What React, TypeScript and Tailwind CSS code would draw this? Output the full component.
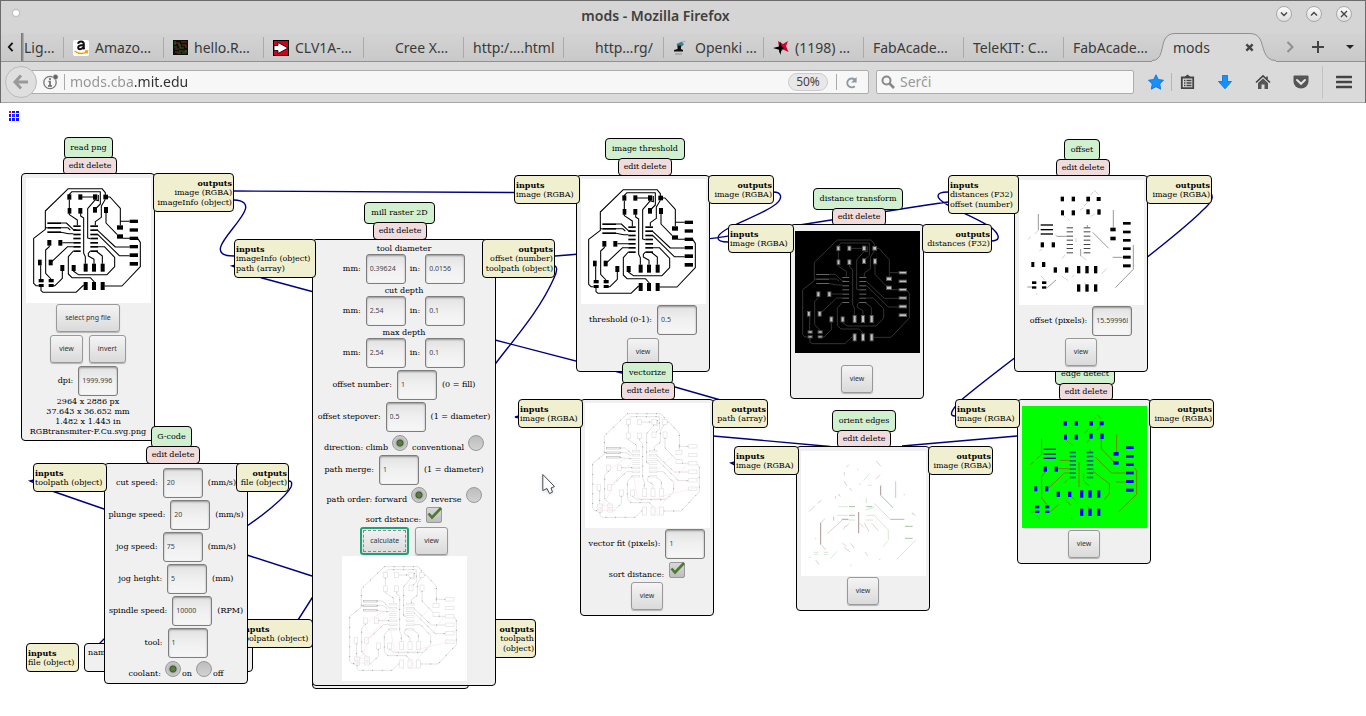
import React from "react";
import type { ReactNode } from "react";

/* ---------- board drawings ---------- */

const PADS: number[][] = [
  [199, 193, 12, 16], [232, 193, 12, 16], [276, 193, 13, 16], [307, 194, 14, 14],
  [200, 234, 11, 17], [232, 234, 12, 17], [276, 231, 12, 17], [309, 231, 12, 18],
  [386, 269, 25, 10], [386, 295, 25, 10], [386, 320, 25, 10], [386, 345, 25, 10], [386, 370, 25, 11], [386, 396, 25, 11],
  [348, 286, 18, 13], [348, 313, 18, 13],
  [139, 330, 12, 17], [172, 330, 12, 17], [111, 389, 11, 17], [143, 389, 12, 17],
  [178, 405, 12, 18], [212, 405, 12, 18],
  [113, 447, 15, 10], [143, 447, 15, 10], [113, 462, 15, 9], [143, 462, 15, 9],
  [248, 401, 12, 24], [273, 401, 12, 24], [299, 401, 12, 24],
  [248, 456, 12, 24], [273, 456, 12, 24], [299, 456, 12, 24],
];

const BARS: number[][] = [
  [139, 277, 41, 5], [139, 291, 41, 5], [139, 304, 41, 5],
];

const PINS: number[][] = [286, 298, 311, 323, 336, 348, 361].flatMap((y) => [
  [217, y, 22, 5],
  [268, y, 23, 5],
]);

const TRACES = [
  "M133 293V243L202 176H303L313 188V196",
  "M205 195V193L213 185H298V222L283 237",
  "M292 195V212L283 209L260 236V324L268 326",
  "M205 209V234M238 201H276",
  "M205 250V254L229 270V286M239 250V258L248 264V370L253 380V401",
  "M313 208L301 228V262L283 275V286",
  "M320 201H327L358 235V274H386M358 274V286",
  "M315 249V279L348 313M366 325H410L418 337V410L363 468H310",
  "M180 279H196L217 299H226M180 293H200L208 300M180 307L203 311H217",
  "M139 293H133V298L98 325V460L105 467H113",
  "M120 471V482L126 487H225L248 465",
  "M119 406V447M184 423V445L162 467H155",
  "M145 347V350L134 360V430L150 447",
  "M184 338H217M149 398L200 350H217",
  "M217 363L202 380V432L213 443H268L280 456",
  "M217 423L232 434H318L341 410V382L310 350H290",
  "M290 301L343 351H386M290 313L355 377H386",
  "M268 363L262 370V378L279 388V401M285 363L304 378V401",
];

function Rects({ list, className }: { list: number[][]; className: string }) {
  return (
    <g className={className}>
      {list.map(([x, y, w, h]) => (
        <rect key={`${x}-${y}`} x={x} y={y} width={w} height={h} />
      ))}
    </g>
  );
}

function PngBoard() {
  return (
    <svg viewBox="75 144 375 375" className="block size-[125px] shrink-0 bg-white">
      <path d={TRACES.join("")} fill="none" stroke="#000" strokeWidth="3.2" strokeLinejoin="round" />
      <Rects list={[...PADS, ...BARS, ...PINS]} className="fill-black" />
    </svg>
  );
}

function VectorBoard() {
  return (
    <svg viewBox="75 144 375 375" className="block size-[125px] shrink-0 bg-white">
      <path d={TRACES.join("")} fill="none" stroke="#dcdcdc" strokeWidth="2.4" />
      <path d={TRACES.join("")} fill="none" stroke="#888" strokeWidth="2.2" strokeDasharray="3 26" />
      <Rects list={[...PADS, ...PINS]} className="fill-white stroke-[#e2e2e2] stroke-2" />
      <Rects list={BARS} className="fill-white stroke-[#bcbcbc] stroke-2" />
      <path
        d="M149 398L217 318M145 345L215 300M220 364L233 432L320 430M290 350L340 300M300 425L410 398M120 470L155 400M273 456L299 480L273 480L299 456L330 420M113 452H158M113 466H158M340 380L386 320"
        fill="none"
        stroke="#fae6e8"
        strokeWidth="2"
      />
    </svg>
  );
}

function DistanceBoard() {
  return (
    <svg viewBox="75 149 375 366" className="block h-[122px] w-[125px] shrink-0 bg-black">
      <path d={TRACES.join("")} fill="none" stroke="#333" strokeWidth="3" />
      <Rects list={[...BARS, ...PINS].map(([x, y, w]) => [x, y + 1, w - 2, 3])} className="fill-[#666]" />
      <Rects list={PADS} className="fill-[#555]" />
      <Rects list={PADS.map(([x, y, w, h]) => [x + 3, y + 3, w - 6, h - 6])} className="fill-[#c4c4c4]" />
    </svg>
  );
}

function OffsetBoard() {
  return (
    <svg viewBox="75 144 375 375" className="block size-[125px] shrink-0 bg-white">
      <g transform="translate(-162 -6)" fill="none" strokeWidth="2">
        <path
          d="M295 252V300M458 307L506 355M520 240V293M518 382H548M580 345V418L526 473M350 319H380M322 473L348 450M442 285V292M422 357V378M262 471H276"
          stroke="#666"
        />
        <path
          d="M264 328L272 321M284 312L296 300M462 180L476 194M452 195L460 185M368 255L376 262M383 266L389 272M432 228L443 217M346 313L350 318M298 364L306 357M366 386L376 374M408 325V336M422 378L440 390M366 438L374 446M376 445L384 452M396 442L404 434M303 438L314 450M484 432L500 416M432 458L438 464M288 492H292M452 260L464 252M420 240L430 234"
          stroke="#bbb"
        />
      </g>
      <Rects list={PINS.map(([x, y, w]) => [x + 1, y, w - 3, 3])} className="fill-[#444]" />
      <Rects list={BARS.map(([x, y, w]) => [x + 1, y, w - 4, 4])} className="fill-black" />
      <Rects list={PADS.map(([x, y, w, h]) => [x + 1, y + 1, w - 2, h - 2])} className="fill-black" />
    </svg>
  );
}

function EdgeBoard() {
  return (
    <svg viewBox="75 149 375 366" className="block h-[122px] w-[125px] shrink-0 bg-[#00ff00]">
      <g transform="translate(-828 12)" fill="none" stroke="#8a7200" strokeWidth="2.6">
        <path d="M962 235V283M928 313L938 305M946 296L962 283M1017 300H1045M1122 290L1172 338H1214M1187 222V276M1185 365H1214M1240 322L1247 332V402L1192 455M1141 235V265L1178 304M962 415V348L973 335M962 412L976 430M1074 305V380M1116 333L1165 370V400L1150 418M983 383L1030 338H1045M1007 325H1045M988 455L1012 432M1088 340V362M1108 268V276" />
        <path
          d="M1129 163L1141 176M1118 178L1124 172M1090 218L1104 206M1126 210L1140 196M1036 240L1044 248M1048 248L1055 256M1098 246L1106 238M1030 368L1040 358M1090 365L1106 377M1034 420L1050 434M1050 408L1064 420M1064 432L1072 424M968 424L980 434M1098 436L1106 446M948 466L956 476M1050 474H1054M930 455H944"
          stroke="#4f9a00"
        />
      </g>
      <Rects list={PINS.map(([x, y, w]) => [x + 1, y, w - 3, 5])} className="fill-[#006a80]" />
      <Rects list={BARS.map(([x, y, w]) => [x + 1, y, w - 4, 4])} className="fill-[#0000c0]" />
      <Rects list={PADS.map(([x, y, w, h]) => [x + 1, y + 1, w - 2, h - 2])} className="fill-[#0000ff]" />
    </svg>
  );
}

function OrientBoard() {
  return (
    <svg viewBox="240 273 375 375" className="block size-[125px] shrink-0 bg-white">
      <g fill="none" strokeWidth="2">
        <path
          stroke="#cdbcbc"
          d="M264 455L282 437M290 430L302 420M299 488L312 476M319 521L366 478H382M466 303L480 319M376 322L384 314M370 336V346M370 364L378 378M386 384L392 392M464 357L478 344M416 490L428 502M430 490L444 514M452 490L472 512M366 508L376 496M376 500L384 490M302 555L314 570M364 548L376 560M388 550L400 564M370 562L388 576M284 600L294 614M432 576L440 588M574 460L584 467M266 592H270M282 536H286M387 616H391M474 598H478M408 328H412M548 404H552M344 408V416M572 460H578"
        />
        <path stroke="#9c8586" strokeWidth="2.6" d="M299 488V554M413 456V520M479 378V406" />
        <path stroke="#c9a6a8" d="M524 364V414M338 470V482M352 402L358 410" />
        <path
          stroke="#bfe0c0"
          d="M352 440H382M348 466H382M436 466H460L502 510V540M460 430L508 478M528 597L584 540M328 596L348 574M428 362L446 340M436 414V430M434 450L460 442M414 372H420M440 376H452M476 376H484M382 480H402M434 480H456M486 560L500 544M278 577H292M308 577H322M278 583H292M308 583H322"
        />
        <path stroke="#8db48f" strokeWidth="2.4" d="M479 406L516 443M508 478H550M552 499H575M552 535H575M384 440H402M384 466H402M362 478H382M436 440H454" />
      </g>
    </svg>
  );
}

/* ---------- form controls ---------- */

function PanelButton({ children, active = false }: { children: ReactNode; active?: boolean }) {
  return (
    <button
      type="button"
      className={
        active
          ? "h-7 rounded-[3px] border-2 border-[#1aa377] bg-linear-to-b from-[#f2f2f2] to-[#dcdcdc] p-px font-['Noto_Sans',sans-serif] text-[7px] leading-[10px] text-[#333]"
          : "h-7 rounded-[3px] border border-[#999] bg-linear-to-b from-[#f4f4f4] to-[#dadada] px-[8px] font-['Noto_Sans',sans-serif] text-[7px] leading-[10px] text-[#333] shadow-[0_1px_1px_rgba(0,0,0,0.25)]"
      }
    >
      {active ? (
        <span className="flex h-full items-center border border-dashed border-[#888] px-[6px]">{children}</span>
      ) : (
        children
      )}
    </button>
  );
}

function Field({ label, value, suffix }: { label: string; value: string; suffix?: string }) {
  return (
    <label className="flex items-center whitespace-nowrap">
      {label}
      <input
        defaultValue={value}
        className="ml-[5px] h-[30px] w-10 rounded-[3px] border border-[#7d7d7d] bg-linear-to-b from-[#e2e2e2] via-[#f0f0f0] to-[#f6f6f6] px-[3px] pb-px font-['Noto_Sans',sans-serif] text-[7px] text-[#444] shadow-[inset_0_1px_2px_rgba(0,0,0,0.35)] outline-none"
      />
      {suffix && <span className="ml-[5px]">{suffix}</span>}
    </label>
  );
}

function Radio({ label, name, on = false }: { label: string; name: string; on?: boolean }) {
  return (
    <label className="flex h-[18px] items-end whitespace-nowrap">
      {label}
      <input
        type="radio"
        name={name}
        defaultChecked={on}
        className="ml-1 size-4 appearance-none self-start rounded-full border border-[#999] bg-linear-to-b from-[#bdbdbd] to-[#d2d2d2] checked:bg-[radial-gradient(circle,#55803c_0_2px,#3f5533_3px,#b5b5b5_4px,#c8c8c8_6px)]"
      />
    </label>
  );
}

function Coolant({ label, on = false }: { label: string; on?: boolean }) {
  return (
    <label className="flex h-[18px] items-end whitespace-nowrap">
      <input
        type="radio"
        name="coolant"
        defaultChecked={on}
        className="mr-px size-4 appearance-none self-start rounded-full border border-[#999] bg-linear-to-b from-[#bdbdbd] to-[#d2d2d2] checked:bg-[radial-gradient(circle,#55803c_0_2px,#3f5533_3px,#b5b5b5_4px,#c8c8c8_6px)]"
      />
      {label}
    </label>
  );
}

function SortDistance() {
  return (
    <label className="flex h-[18px] items-end whitespace-nowrap">
      sort distance:
      <span className="relative ml-[5px] size-4 self-start">
        <input
          type="checkbox"
          defaultChecked
          className="peer block size-4 appearance-none rounded-[2px] border border-[#999] bg-linear-to-b from-[#d8d8d8] to-[#bdbdbd]"
        />
        <svg viewBox="0 0 16 16" className="pointer-events-none absolute inset-0 hidden size-4 overflow-visible peer-checked:block">
          <path d="M2.500 6.500L6 10.500L15 1" fill="none" stroke="#4d7a32" strokeWidth="2.600" />
        </svg>
      </span>
    </label>
  );
}

/* ---------- module parts ---------- */

function Title({ at, children }: { at: string; children: ReactNode }) {
  return (
    <h2 className={`absolute rounded-[4px] border border-black bg-[#d0f0d0] py-[5px] text-center whitespace-nowrap ${at}`}>
      {children}
    </h2>
  );
}

function Edit({ at }: { at: string }) {
  return (
    <div className={`absolute flex w-[54px] justify-center gap-[2px] rounded-[4px] border border-black bg-[#f0dcdc] py-[3px] ${at}`}>
      <button type="button">edit</button>
      <button type="button">delete</button>
    </div>
  );
}

function Port({ at, kind, items }: { at: string; kind: "inputs" | "outputs"; items: string[] }) {
  return (
    <div
      className={`absolute rounded-[4px] border border-black bg-[#f0f0d0] px-px pt-1 pb-[3px] whitespace-nowrap ${
        kind === "outputs" ? "text-right" : "text-left"
      } ${at}`}
    >
      <div className="font-bold">{kind}</div>
      {items.map((item) => (
        <div key={item}>{item}</div>
      ))}
    </div>
  );
}

function Panel({ at, children }: { at: string; children?: ReactNode }) {
  return (
    <div className={`absolute flex flex-col items-center rounded-[4px] border border-black bg-[#f0f0f0] ${at}`}>{children}</div>
  );
}

const LINKS = [
  "M234 191L514 192.500",
  "M234 200C276 202 188 256 234 256",
  "M555 256C690 246 810 222 948 202",
  "M554 266C558 266 557 272 554 278C540 310 515 338 496 363L312 598L298 620",
  "M34 480L30 481L52 491L104 509L247 555L312 576",
  "M236 265L232 266L262 278L312 291.500L495 340L622 373L675 387L724 401",
  "M773 192C782 192 783 198 776 204C760 217 718 228 718 238Q718 242 728 242",
  "M991 241C1000 241 1000 236 994 230C985 220 938 205 938 196Q938 192 948 192",
  "M1211 193C1215 200 1208 205 1200 213C1150 260 1014 355 960 401Q946 416 955 416",
  "M1017 436L902 446",
  "M713 436L830 446.500",
  "M735 462L731 463L735 465",
  "M519 416L515 417L519 418",
  "M289 481Q293 481 291 487C286 497 262 516 247 526L104 639L96 647",
];

function Canvas() {
  return (
    <main className="relative min-h-[613px] flex-1 overflow-hidden bg-white font-['DejaVu_Serif',serif] text-[8px] leading-[10px] text-black">
      <svg viewBox="0 0 10 10" className="absolute top-2 left-[9px] size-[10px]" shapeRendering="crispEdges">
        <path d="M3 0h3v2h-3zM7 0h3v2h-3zM0 3h2v3h-2zM3 3h3v3h-3zM7 3h3v3h-3zM0 7h2v3h-2zM3 7h3v3h-3zM7 7h3v3h-3z" fill="#1010ff" />
        <path d="M0 0h2v2h-2zM4 3h1v3h-1zM3 4h3v1h-3z" fill="#f00" />
      </svg>
      <svg viewBox="0 103 1366 613" className="absolute top-0 left-0 h-[613px] w-[1366px]">
        <path d={LINKS.join("")} fill="none" stroke="#000080" strokeWidth="1.400" />
      </svg>

      {/* save file */}
      <Panel at="left-[84px] top-[540px] h-[29px] w-[169px]">
        <span className="self-start pt-1 pl-[3px]">name:</span>
      </Panel>
      <Port at="left-[26px] top-[540px] w-[53px]" kind="inputs" items={["file (object)"]} />

      {/* view toolpath */}
      <Panel at="left-[312px] top-[516px] h-[70px] w-[157px]" />
      <Port at="left-[239px] top-[516px] w-[74px]" kind="inputs" items={["toolpath (object)"]} />
      <Port at="left-[467px] top-[516px] w-[69px]" kind="outputs" items={["toolpath", "(object)"]} />

      {/* read png */}
      <Title at="left-[64px] top-[34px] w-[49px]">read png</Title>
      <Edit at="left-[63px] top-[54px]" />
      <Panel at="left-[21px] top-[70px] w-[134px] pt-1 pb-[3px]">
        <PngBoard />
        <div className="mt-px flex">
          <PanelButton>select png file</PanelButton>
        </div>
        <div className="mt-[3px] flex gap-[6px]">
          <PanelButton>view</PanelButton>
          <PanelButton>invert</PanelButton>
        </div>
        <div className="mt-[3px]">
          <Field label="dpi:" value="1999.996" />
        </div>
        <p className="pt-px text-center whitespace-nowrap">
          2964 x 2886 px
          <br />
          37.643 x 36.652 mm
          <br />
          1.482 x 1.443 in
          <br />
          RGBtransmiter-F.Cu.svg.png
        </p>
      </Panel>
      <Port at="left-[153px] top-[70px] w-[81px]" kind="outputs" items={["image (RGBA)", "imageInfo (object)"]} />

      {/* G-code */}
      <Title at="left-[151px] top-[323px] w-[41px]">G-code</Title>
      <Edit at="left-[146px] top-[343px]" />
      <Panel at="left-[104px] top-[360px] w-[144px] gap-[2px] pt-1 pb-1">
        <Field label="cut speed:" value="20" suffix="(mm/s)" />
        <Field label="plunge speed:" value="20" suffix="(mm/s)" />
        <Field label="jog speed:" value="75" suffix="(mm/s)" />
        <Field label="jog height:" value="5" suffix="(mm)" />
        <Field label="spindle speed:" value="10000" suffix="(RPM)" />
        <Field label="tool:" value="1" />
        <div className="mt-px flex items-end gap-1">
          coolant:
          <Coolant label="on" on />
          <Coolant label="off" />
        </div>
      </Panel>
      <Port at="left-[33px] top-[360px] w-[74px]" kind="inputs" items={["toolpath (object)"]} />
      <Port at="left-[236px] top-[360px] w-[53px]" kind="outputs" items={["file (object)"]} />

      {/* mill raster 2D */}
      <Title at="left-[364px] top-[99px] w-[71px]">mill raster 2D</Title>
      <Edit at="left-[373px] top-[119px]" />
      <Panel at="left-[312px] top-[136px] w-[184px] pt-[3px] pb-1">
        {[
          ["tool diameter", "0.39624", "0.0156"],
          ["cut depth", "2.54", "0.1"],
          ["max depth", "2.54", "0.1"],
        ].map(([name, mm, inch]) => (
          <div key={name} className="flex flex-col items-center pt-px">
            {name}
            <div className="flex gap-1 pb-px">
              <Field label="mm:" value={mm} />
              <Field label="in:" value={inch} />
            </div>
          </div>
        ))}
        <div className="mt-px flex flex-col items-center gap-[2px]">
          <Field label="offset number:" value="1" suffix="(0 = fill)" />
          <Field label="offset stepover:" value="0.5" suffix="(1 = diameter)" />
          <div className="mt-px flex gap-1">
            <Radio label="direction: climb" name="direction" on />
            <Radio label="conventional" name="direction" />
          </div>
          <Field label="path merge:" value="1" suffix="(1 = diameter)" />
          <div className="flex gap-1">
            <Radio label="path order: forward" name="order" on />
            <Radio label="reverse" name="order" />
          </div>
          <SortDistance />
          <div className="flex gap-[6px]">
            <PanelButton active>calculate</PanelButton>
            <PanelButton>view</PanelButton>
          </div>
        </div>
        <div className="mt-px pl-px">
          <VectorBoard />
        </div>
      </Panel>
      <Port at="left-[234px] top-[136px] w-[82px]" kind="inputs" items={["imageInfo (object)", "path (array)"]} />
      <Port at="left-[482px] top-[136px] w-[73px]" kind="outputs" items={["offset (number)", "toolpath (object)"]} />

      {/* image threshold */}
      <Title at="left-[605px] top-[35px] w-[80px]">image threshold</Title>
      <Edit at="left-[618px] top-[55px]" />
      <Panel at="left-[576px] top-[72px] w-[134px] pt-[3px] pb-[5px]">
        <PngBoard />
        <div className="mt-px flex flex-col items-center gap-[3px]">
          <Field label="threshold (0-1):" value="0.5" />
          <PanelButton>view</PanelButton>
        </div>
      </Panel>
      <Port at="left-[514px] top-[72px] w-[66px]" kind="inputs" items={["image (RGBA)"]} />
      <Port at="left-[708px] top-[72px] w-[66px]" kind="outputs" items={["image (RGBA)"]} />

      {/* vectorize */}
      <Title at="left-[622px] top-[259px] w-[51px]">vectorize</Title>
      <Edit at="left-[621px] top-[279px]" />
      <Panel at="left-[580px] top-[296px] w-[134px] pt-[3px] pb-[5px]">
        <VectorBoard />
        <div className="mt-px flex flex-col items-center gap-[2px]">
          <Field label="vector fit (pixels):" value="1" />
          <div className="pt-px">
            <SortDistance />
          </div>
          <PanelButton>view</PanelButton>
        </div>
      </Panel>
      <Port at="left-[518px] top-[296px] w-[65px]" kind="inputs" items={["image (RGBA)"]} />
      <Port at="left-[712px] top-[296px] w-[56px]" kind="outputs" items={["path (array)"]} />

      {/* distance transform */}
      <Title at="left-[813px] top-[85px] w-[90px]">distance transform</Title>
      <Edit at="left-[832px] top-[105px]" />
      <Panel at="left-[790px] top-[121px] w-[134px] pt-[6px] pb-[5px]">
        <DistanceBoard />
        <div className="mt-3 flex">
          <PanelButton>view</PanelButton>
        </div>
      </Panel>
      <Port at="left-[728px] top-[121px] w-[66px]" kind="inputs" items={["image (RGBA)"]} />
      <Port at="left-[922px] top-[121px] w-[70px]" kind="outputs" items={["distances (F32)"]} />

      {/* edge detect */}
      <Title at="left-[1055px] top-[260px] w-[60px]">edge detect</Title>
      <Edit at="left-[1059px] top-[280px]" />
      <Panel at="left-[1017px] top-[296px] w-[134px] pt-[6px] pb-[5px]">
        <EdgeBoard />
        <div className="mt-[2px] flex">
          <PanelButton>view</PanelButton>
        </div>
      </Panel>
      <Port at="left-[955px] top-[296px] w-[65px]" kind="inputs" items={["image (RGBA)"]} />
      <Port at="left-[1149px] top-[296px] w-[65px]" kind="outputs" items={["image (RGBA)"]} />

      {/* offset */}
      <Title at="left-[1064px] top-[36px] w-[36px]">offset</Title>
      <Edit at="left-[1056px] top-[56px]" />
      <Panel at="left-[1014px] top-[72px] w-[134px] pt-1 pb-[5px]">
        <OffsetBoard />
        <div className="mt-px flex flex-col items-center gap-[2px]">
          <Field label="offset (pixels):" value="15.599968" />
          <PanelButton>view</PanelButton>
        </div>
      </Panel>
      <Port at="left-[948px] top-[72px] w-[71px]" kind="inputs" items={["distances (F32)", "offset (number)"]} />
      <Port at="left-[1146px] top-[72px] w-[66px]" kind="outputs" items={["image (RGBA)"]} />

      {/* orient edges */}
      <Title at="left-[832px] top-[307px] w-[64px]">orient edges</Title>
      <Edit at="left-[837px] top-[327px]" />
      <Panel at="left-[796px] top-[343px] w-[134px] pt-1 pb-[5px]">
        <OrientBoard />
        <div className="mt-px flex">
          <PanelButton>view</PanelButton>
        </div>
      </Panel>
      <Port at="left-[734px] top-[343px] w-[65px]" kind="inputs" items={["image (RGBA)"]} />
      <Port at="left-[928px] top-[343px] w-[65px]" kind="outputs" items={["image (RGBA)"]} />

      {/* pointer */}
      <svg viewBox="0 0 14 22" className="absolute top-[370px] left-[542px] h-[22px] w-[14px] drop-shadow">
        <path d="M0.800 1.500V17.500L5 15.500L7.500 20.500L10.500 19.200L9 15L12.500 13.500Z" fill="#fff" stroke="#444c50" strokeWidth="1" strokeLinejoin="round" />
      </svg>
    </main>
  );
}

/* ---------- browser chrome ---------- */

function AmazonIcon() {
  return (
    <svg viewBox="0 0 16 16" className="size-4 shrink-0">
      <rect width="16" height="16" rx="2" fill="#fff" />
      <path d="M5 3.800Q5.500 1.500 8 1.500Q10.800 1.500 10.800 4V7.500Q10.800 8.500 11.500 9.200M10.500 5Q5.200 5 5.200 7.500Q5.200 9.200 7 9.200Q9 9.200 10.500 7" fill="none" stroke="#111" strokeWidth="2" />
      <path d="M1.500 11Q7.500 15.500 13.500 12M12 11H14.500L14 13.500" fill="none" stroke="#f90" strokeWidth="1.400" />
    </svg>
  );
}

function BoardIcon() {
  return (
    <svg viewBox="0 0 15 15" className="size-[15px] shrink-0">
      <rect width="15" height="15" fill="#0c0f08" />
      <path d="M1 3H6V6M8 2H14M9 5H13V8M2 9H6M2 12H5V14M8 11H14" fill="none" stroke="#7a2a1c" strokeWidth="1.200" />
      <path d="M2 1V5M7 4V8H11M4 7H1M9 13H13V10M7 10V14" fill="none" stroke="#2c5a26" strokeWidth="1.200" />
    </svg>
  );
}

function ArrowIcon() {
  return (
    <svg viewBox="0 0 16 16" className="size-4 shrink-0">
      <rect x=".5" y=".5" width="15" height="15" fill="#d4001a" stroke="#000" />
      <path d="M1 5.500H5V2.500L15 8L5 13.500V10.500H1Z" fill="#fff" stroke="#000" strokeWidth=".8" />
    </svg>
  );
}

function OpenkiIcon() {
  return (
    <svg viewBox="0 0 16 16" className="size-4 shrink-0">
      <path d="M3.500 4L9 1.500L11 4.500L8 7H5Z" fill="#3f7f95" />
      <path d="M9.500 2L12.500 1" stroke="#88b4c4" strokeWidth="1.200" />
      <path d="M4.500 5.500H8V9L10 10V11.500H1V10L4.500 9Z" fill="#111" />
      <path d="M2 14H9" stroke="#999" strokeWidth="1.200" />
    </svg>
  );
}

function StarsIcon() {
  return (
    <svg viewBox="0 0 16 16" className="size-4 shrink-0">
      <path d="M6 7L5 1L10 4L15 1L13 6L15.500 12L10 9.500L6 13Z" fill="#d4002d" />
      <path d="M7.500 1.500L8.500 6.500L11.500 8L8.500 9.500L7.500 15L6 9.800L0 8L6 6.500Z" fill="#000" />
    </svg>
  );
}

const TABS: { label: string; icon?: ReactNode; pad?: boolean }[] = [
  { label: "Amazo…", icon: <AmazonIcon /> },
  { label: "hello.R…", icon: <BoardIcon /> },
  { label: "CLV1A-…", icon: <ArrowIcon /> },
  { label: "Cree X…", pad: true },
  { label: "http:/….html" },
  { label: "http…rg/", pad: true },
  { label: "Openki …", icon: <OpenkiIcon /> },
  { label: "(1198) …", icon: <StarsIcon /> },
  { label: "FabAcade…" },
  { label: "TeleKIT: C…" },
  { label: "FabAcade…" },
];

function WindowButton({ label, d }: { label: string; d: string }) {
  return (
    <button type="button" aria-label={label} className="size-4 rounded-full border border-[#a8a8a8] bg-linear-to-b from-[#fafafa] to-[#dedede]">
      <svg viewBox="0 0 14 14" className="size-[14px]">
        <path d={d} fill="none" stroke="#444" strokeWidth="1.400" />
      </svg>
    </button>
  );
}

function TabStrip() {
  return (
    <div className="flex h-[29px] border-b border-[#8f9194] bg-linear-to-b from-[#d3d3d3] to-[#c9c9c9] text-[14px] leading-5 text-[#3a3a3a]">
      <button type="button" aria-label="Scroll tabs left" className="flex w-[21px] shrink-0 items-center justify-center">
        <svg viewBox="0 0 8 12" className="h-[10px] w-[7px]">
          <path d="M6.500 1L2 6L6.500 11" fill="none" stroke="#111" strokeWidth="2.200" />
        </svg>
      </button>
      <span className="w-[3px] shrink-0 bg-linear-to-r from-[#6a6a6a] to-[#b8b8b8]" />
      <button type="button" className="mt-1 mb-[3px] w-10 shrink-0 border-r border-[#aaa] text-left whitespace-nowrap">
        Lig…
      </button>
      {TABS.map((tab, i) => (
        <button
          key={i}
          type="button"
          className={
            i === TABS.length - 1
              ? "mt-1 mb-[3px] flex w-24 shrink-0 items-center gap-[6px] pl-[9px] whitespace-nowrap"
              : "mt-1 mb-[3px] flex w-25 shrink-0 items-center gap-[6px] border-r border-[#aaa] pl-[9px] whitespace-nowrap"
          }
        >
          {tab.icon}
          <span className={tab.pad ? "pl-[22px]" : ""}>{tab.label}</span>
        </button>
      ))}
      <div className="relative flex h-[29px] w-[112px] shrink-0 items-center justify-between pr-[18px] pl-[13px]">
        <svg viewBox="0 0 128 30" className="absolute -top-px -left-2 h-[30px] w-[128px]">
          <path d="M0 30V29C11 29 9 14 13 7Q16 1.500 23 1.500H98Q105 1.500 108 7C112 14 111 29 124 29V30Z" fill="#d9d9d9" />
          <path d="M0 28.500C11 28.500 9 14 13 7Q16 1.500 23 1.500H98Q105 1.500 108 7C112 14 111 28.500 124 28.500" fill="none" stroke="#8f9194" />
        </svg>
        <button type="button" className="relative">
          mods
        </button>
        <button type="button" aria-label="Close tab" className="relative">
          <svg viewBox="0 0 10 10" className="size-[9px]">
            <path d="M1.500 1.500L8.500 8.500M8.500 1.500L1.500 8.500" stroke="#444" strokeWidth="2.600" />
          </svg>
        </button>
      </div>
      <div className="flex flex-1 items-center justify-end gap-4 pr-[11px]">
        <button type="button" aria-label="Scroll tabs right">
          <svg viewBox="0 0 10 12" className="h-3 w-[10px]">
            <path d="M2.500 1L7.500 6L2.500 11" fill="none" stroke="#8f8f8f" strokeWidth="2" />
          </svg>
        </button>
        <button type="button" aria-label="New tab">
          <svg viewBox="0 0 14 14" className="size-[14px]">
            <path d="M7 1V13M1 7H13" stroke="#444" strokeWidth="2" />
          </svg>
        </button>
        <button type="button" aria-label="List all tabs" className="pl-1">
          <svg viewBox="0 0 10 6" className="h-[6px] w-[10px]">
            <path d="M1 1H9L5 5Z" fill="#222" />
          </svg>
        </button>
      </div>
    </div>
  );
}

function Toolbar() {
  return (
    <div className="flex h-[41px] items-center border-b border-[#a6a6a6] bg-[#dadada] pl-[5px] text-[14px]">
      <button type="button" aria-label="Back" className="z-10 flex size-8 shrink-0 items-center justify-center rounded-full border border-[#bbb] bg-[#dfdfdf]">
        <svg viewBox="0 0 16 16" className="size-4">
          <path d="M8 1.500L2 8L8 14.500M2.500 8H15" fill="none" stroke="#999" strokeWidth="3" />
        </svg>
      </button>
      <div className="-ml-[10px] flex h-6 min-w-0 flex-1 items-center rounded-[2px] border border-[#adadad] bg-[#f7f7f7] pl-[15px]">
        <svg viewBox="0 0 16 16" className="size-4 shrink-0">
          <circle cx="7" cy="8.500" r="6.200" fill="none" stroke="#777" strokeWidth="1.300" />
          <path d="M7 4V6M5.500 7.500H7V12M5 12H9" fill="none" stroke="#666" strokeWidth="1.600" />
          <circle cx="12.500" cy="3" r="2.700" fill="#666" stroke="#f7f7f7" strokeWidth=".6" />
        </svg>
        <div className="mx-[5px] h-4 w-px bg-[#aaa]" />
        <input
          aria-label="Address"
          defaultValue="mods.cba.mit.edu"
          className="min-w-0 flex-1 bg-[linear-gradient(90deg,#939393_65px,#2e2e2e_65px)] bg-clip-text pb-[2px] text-transparent outline-none"
        />
        <button type="button" className="h-[18px] w-10 rounded-full border border-[#ccc] bg-[#e8e8e8] text-[12px] leading-4 text-[#444]">
          50%
        </button>
        <div className="mx-2 h-4 w-px bg-[#aaa]" />
        <button type="button" aria-label="Reload" className="mr-[10px]">
          <svg viewBox="0 0 14 14" className="size-[13px]">
            <path d="M10.500 11A4.800 4.800 0 1 1 11 4.500" fill="none" stroke="#8c99a6" strokeWidth="2" />
            <path d="M12.500 1V7H6.500Z" fill="#8c99a6" />
          </svg>
        </button>
      </div>
      <label className="ml-[7px] flex h-6 w-[258px] shrink-0 items-center rounded-[2px] border border-[#adadad] bg-[#f7f7f7] pl-1">
        <svg viewBox="0 0 14 14" className="size-[14px] shrink-0" aria-label="Search">
          <circle cx="5.500" cy="5.500" r="4" fill="none" stroke="#888" strokeWidth="2" />
          <path d="M8.500 8.500L13 13" stroke="#888" strokeWidth="2.600" />
        </svg>
        <input placeholder="Serĉi" className="ml-[5px] min-w-0 flex-1 pb-[2px] outline-none placeholder:text-[#999]" />
      </label>
      <div className="flex h-full items-center text-[#4d4d4d]">
        <button type="button" aria-label="Bookmark" className="ml-[14px]">
          <svg viewBox="0 0 16 16" className="size-4">
            <path d="M8 .8L10.300 5.500L15.500 6.200L11.800 9.900L12.700 15.200L8 12.700L3.300 15.200L4.200 9.900L.5 6.200L5.700 5.500Z" fill="#1590ff" stroke="#0a6fce" strokeWidth=".8" />
          </svg>
        </button>
        <div className="mr-2 ml-[7px] h-[18px] w-px bg-[#b5b5b5]" />
        <button type="button" aria-label="Bookmarks menu">
          <svg viewBox="0 0 15 16" className="h-4 w-[15px]">
            <path d="M1.800 3.500H13.200V14.200H1.800Z" fill="none" stroke="#444" strokeWidth="1.800" />
            <path d="M5 2.500L7.500 .5L10 2.500V4H5Z" fill="#444" />
            <path d="M4 6.500H5.500M6.500 6.500H11.500M4 9H5.500M6.500 9H11.500M4 11.500H5.500M6.500 11.500H11.500" stroke="#444" strokeWidth="1.300" />
          </svg>
        </button>
        <button type="button" aria-label="Downloads" className="ml-[23px]">
          <svg viewBox="0 0 14 16" className="h-4 w-[14px]">
            <path d="M4.500 1.500H9.500V7.500H13.500L7 14.800L.5 7.500H4.500Z" fill="#1590ff" stroke="#0a6fce" strokeWidth=".8" />
          </svg>
        </button>
        <button type="button" aria-label="Home" className="ml-[23px]">
          <svg viewBox="0 0 16 16" className="size-4">
            <path d="M1 8.500L8 1.800L15 8.500" fill="none" stroke="#444" strokeWidth="1.600" />
            <path d="M3 9L8 4.500L13 9V15H9.500V10.500H6.500V15H3Z" fill="#555" />
            <path d="M12 2.500V5" stroke="#444" strokeWidth="1.600" />
          </svg>
        </button>
        <button type="button" aria-label="Pocket" className="ml-[22px]">
          <svg viewBox="0 0 16 16" className="size-4">
            <path d="M1.500 1.500H14.500Q15.500 1.500 15.500 2.500V7.500A7.500 7 0 0 1 .5 7.500V2.500Q.5 1.500 1.500 1.500Z" fill="#555" />
            <path d="M4 6L8 9.800L12 6" fill="none" stroke="#e4e4e4" strokeWidth="2" strokeLinecap="round" />
          </svg>
        </button>
        <div className="mr-[13px] ml-[13px] h-8 w-px bg-[#c2c2c2]" />
        <button type="button" aria-label="Menu" className="mr-[14px]">
          <svg viewBox="0 0 16 14" className="h-[14px] w-4">
            <path d="M1 2H15M1 7H15M1 12H15" stroke="#444" strokeWidth="2.600" strokeLinecap="round" />
          </svg>
        </button>
      </div>
    </div>
  );
}

export default function App() {
  return (
    <div className="flex min-h-screen flex-col overflow-hidden font-['Noto_Sans',sans-serif] outline -outline-offset-1 outline-[#6b6b6b]">
      <header className="flex h-[33px] items-center justify-between bg-[#d5d5d5] pr-[14px] pl-[13px]">
        <button type="button" aria-label="Window menu" className="mb-[7px] flex w-[76px]">
          <span className="size-[6px] rounded-full bg-white shadow-[0_0_2px_rgba(0,0,0,0.4)]" />
        </button>
        <h1 className="pr-[54px] pb-[2px] text-[14px] leading-5 font-semibold text-[#404040]">mods - Mozilla Firefox</h1>
        <div className="mb-[6px] flex gap-[14px]">
          <WindowButton label="Minimize" d="M4 5.500L7 8.500L10 5.500" />
          <WindowButton label="Maximize" d="M4 8.500L7 5.500L10 8.500" />
          <WindowButton label="Close" d="M4 4L10 10M10 4L4 10" />
        </div>
      </header>
      <TabStrip />
      <Toolbar />
      <Canvas />
    </div>
  );
}
